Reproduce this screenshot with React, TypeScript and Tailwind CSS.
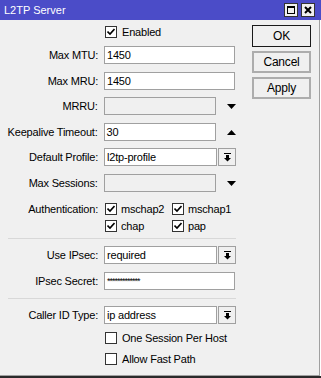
import React from "react";

function Check({ checked = true }: { checked?: boolean }) {
  return (
    <div className="w-[12px] h-[12px] border border-[#333333] bg-white flex items-center justify-center shrink-0">
      {checked && (
        <svg width="8" height="8" viewBox="0 0 8 8">
          <path d="M0.5 3.5 L3 6 L7.5 1" stroke="#000" strokeWidth="1.6" fill="none" />
        </svg>
      )}
    </div>
  );
}

function ComboIcon() {
  return (
    <svg width="7" height="9" viewBox="0 0 7 9">
      <rect x="0" y="0" width="7" height="1" fill="#000" />
      <rect x="2" y="2" width="3" height="3" fill="#000" />
      <path d="M0 5 L7 5 L3.5 8.5 Z" fill="#000" />
    </svg>
  );
}

function Label({ text }: { text: string }) {
  return <div className="w-[99px] text-right pr-[1px] whitespace-nowrap">{text}</div>;
}

function Input({ value, disabled, wide = true, pw }: { value?: string; disabled?: boolean; wide?: boolean; pw?: boolean }) {
  return (
    <div
      className={
        (wide ? "w-[131px] " : "w-[113px] ") +
        "h-[18px] border border-[#a0a0a0] flex items-center pl-[2px] " +
        (disabled ? "bg-[#f0f0f0]" : "bg-white") +
        (pw ? " text-[9px] tracking-[-1px] leading-none" : "")
      }
    >
      {value}
    </div>
  );
}

function Combo({ value }: { value: string }) {
  return (
    <div className="flex gap-[1px]">
      <Input value={value} wide={false} />
      <div className="w-[18px] h-[18px] border border-[#a0a0a0] flex items-center justify-center">
        <ComboIcon />
      </div>
    </div>
  );
}

function Tri({ up }: { up?: boolean }) {
  return (
    <div className="w-[18px] h-[18px] flex items-center justify-center ml-[1px]">
      <svg width="9" height="5" viewBox="0 0 9 5">
        {up ? <path d="M0 5 L9 5 L4.5 0 Z" fill="#000" /> : <path d="M0 0 L9 0 L4.5 5 Z" fill="#000" />}
      </svg>
    </div>
  );
}

function Btn({ text, def }: { text: string; def?: boolean }) {
  return (
    <div
      className={
        "w-[59px] h-[22px] flex items-center justify-center text-[12px] bg-[#f0f0f0] " +
        (def ? "border border-[#1a1a1a]" : "border-2 border-[#adadad]")
      }
    >
      {text}
    </div>
  );
}

export default function App() {
  return (
    <div className="w-[321px] h-[378px] bg-white font-['Liberation_Sans',Arial,sans-serif] text-[11px] tracking-[-0.2px] text-black flex flex-col">
      <div className="h-[20px] bg-[#4b4cc8] flex items-center justify-between pl-[4px] pr-[6px] text-white text-[11px] tracking-normal shrink-0">
        <span>L2TP Server</span>
        <div className="flex gap-[3px]">
          <div className="w-[14px] h-[14px] bg-[#f0f0f0] border border-[#333] flex items-center justify-center">
            <div className="w-[8px] h-[8px] border border-black border-t-2" />
          </div>
          <div className="w-[14px] h-[14px] bg-[#f0f0f0] border border-[#333] flex items-center justify-center">
            <svg width="8" height="8" viewBox="0 0 8 8">
              <path d="M1 1 L7 7 M7 1 L1 7" stroke="#000" strokeWidth="2" />
            </svg>
          </div>
        </div>
      </div>
      <div className="flex-1 flex flex-col">
        <div className="flex-1 flex bg-[#f0f0f0] border-r border-[#a0a0a0] mr-[1px] border-b">
          <div className="w-[240px] flex flex-col">
            <div className="mt-[3px] h-[18px] flex items-center pl-[105px] gap-[5px]">
              <Check />
              <span>Enabled</span>
            </div>
            <div className="mt-[5px] h-[18px] flex items-center gap-[5px]">
              <Label text="Max MTU:" />
              <Input value="1450" />
            </div>
            <div className="mt-[8px] h-[18px] flex items-center gap-[5px]">
              <Label text="Max MRU:" />
              <Input value="1450" />
            </div>
            <div className="mt-[7px] h-[18px] flex items-center gap-[5px]">
              <Label text="MRRU:" />
              <Input disabled wide={false} />
              <Tri />
            </div>
            <div className="mt-[8px] h-[18px] flex items-center gap-[5px]">
              <Label text="Keepalive Timeout:" />
              <Input value="30" wide={false} />
              <Tri up />
            </div>
            <div className="mt-[7px] h-[18px] flex items-center gap-[5px]">
              <Label text="Default Profile:" />
              <Combo value="l2tp-profile" />
            </div>
            <div className="mt-[8px] h-[18px] flex items-center gap-[5px]">
              <Label text="Max Sessions:" />
              <Input disabled wide={false} />
              <Tri />
            </div>
            <div className="mt-[8px] h-[18px] flex items-center gap-[5px]">
              <Label text="Authentication:" />
              <div className="flex items-center">
                <div className="w-[68px] flex items-center gap-[4px] pl-[1px]">
                  <Check />
                  <span>mschap2</span>
                </div>
                <div className="flex items-center gap-[4px]">
                  <Check />
                  <span>mschap1</span>
                </div>
              </div>
            </div>
            <div className="mt-[-1px] h-[18px] flex items-center gap-[5px]">
              <div className="w-[99px]" />
              <div className="flex items-center">
                <div className="w-[68px] flex items-center gap-[4px] pl-[1px]">
                  <Check />
                  <span>chap</span>
                </div>
                <div className="flex items-center gap-[4px]">
                  <Check />
                  <span>pap</span>
                </div>
              </div>
            </div>
            <div className="mt-[3px] ml-[8px] w-[228px] border-t border-[#d8d8d8]" />
            <div className="mt-[7px] h-[18px] flex items-center gap-[5px]">
              <Label text="Use IPsec:" />
              <Combo value="required" />
            </div>
            <div className="mt-[8px] h-[18px] flex items-center gap-[5px]">
              <Label text="IPsec Secret:" />
              <Input value="*************" pw />
            </div>
            <div className="mt-[8px] ml-[8px] w-[228px] border-t border-[#d8d8d8]" />
            <div className="mt-[7px] h-[18px] flex items-center gap-[5px]">
              <Label text="Caller ID Type:" />
              <Combo value="ip address" />
            </div>
            <div className="mt-[5px] h-[18px] flex items-center pl-[105px] gap-[5px]">
              <Check checked={false} />
              <span>One Session Per Host</span>
            </div>
            <div className="mt-[3px] h-[18px] flex items-center pl-[105px] gap-[5px]">
              <Check checked={false} />
              <span>Allow Fast Path</span>
            </div>
          </div>
          <div className="flex flex-col gap-[4px] pt-[5px] pl-[12px]">
            <Btn text="OK" def />
            <Btn text="Cancel" />
            <Btn text="Apply" />
          </div>
        </div>
        <div className="h-[2px] bg-[#2a2a2a]" />
      </div>
    </div>
  );
}
